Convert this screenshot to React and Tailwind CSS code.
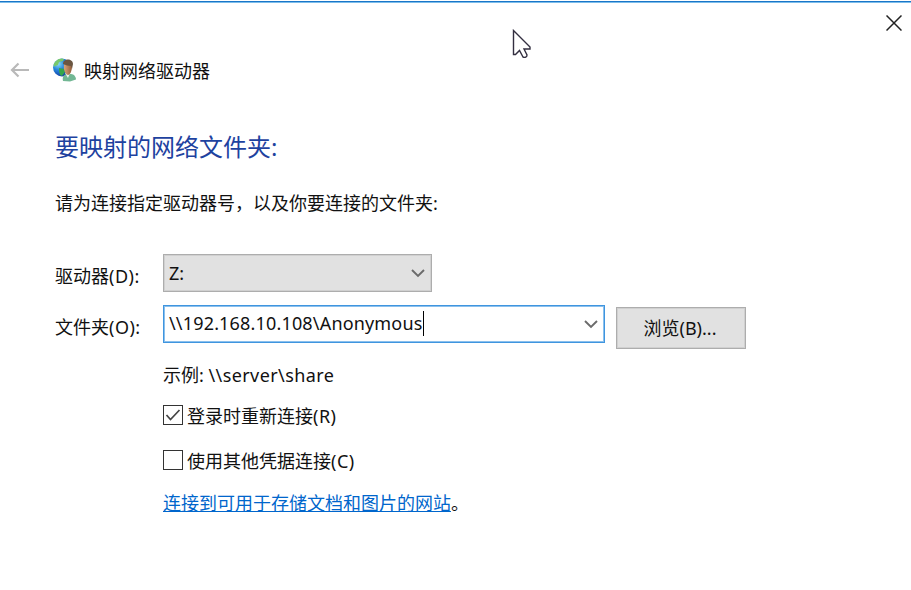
import React from "react";

function Chevron() {
  return (
    <svg className="h-[10px] w-[14px] shrink-0" viewBox="0 0 14 10" fill="none" stroke="#6b6b6b" strokeWidth="1.9">
      <path d="M1 2l6 6 6-6" />
    </svg>
  );
}

function AccountGlobe() {
  return (
    <svg className="h-[26px] w-[26px] shrink-0" viewBox="0 0 26 26">
      <defs>
        <radialGradient id="sea" cx="0.3" cy="0.3" r="0.75">
          <stop offset="0" stopColor="#8fdcf5" />
          <stop offset="0.45" stopColor="#2687dc" />
          <stop offset="1" stopColor="#1238a0" />
        </radialGradient>
        <linearGradient id="skin" x1="0" x2="1">
          <stop offset="0" stopColor="#dba77c" />
          <stop offset="1" stopColor="#925c38" />
        </linearGradient>
      </defs>
      <circle cx="10" cy="10.500" r="9" fill="url(#sea)" />
      <path d="M3 5c3-4 7-4 9-3l-1 2-4 1-1 3-3 1-1 1c-1-2 0-4 1-5z" fill="#79c96c" />
      <path d="M7 11l5 1 1 3-3 4-2-1-1-4z" fill="#35a64a" />
      <path d="M11 24c-1-4 1-7 4-7h4c3 0 5 3 5 5.500l-6 2z" fill="#72b794" />
      <path d="M13 16l3 5 2-5z" fill="#eef4ee" />
      <path d="M12 8c1-3 7-3 8 1 0 5-2 9-4 9s-5-5-4-10z" fill="url(#skin)" />
      <path d="M11 7c0-6 10-6 10 0l-1 5-1-3c-3 0-5-1-8-2z" fill="#6b5642" />
    </svg>
  );
}

export default function App() {
  return (
    <div className="relative flex h-[590px] w-[911px] flex-col overflow-hidden bg-white font-['Noto_Sans','Noto_Sans_CJK_SC',sans-serif] text-[18px] leading-[24px] whitespace-nowrap text-[#111]">
      <div className="mt-px h-[2px] shrink-0 border-b border-[#7dbdea] bg-[#1976c8]" />
      <div className="flex h-[41px] shrink-0 justify-end pt-[12px] pr-[9px]">
        <svg className="h-[16px] w-[16px]" viewBox="0 0 16 16" fill="none" stroke="#222" strokeWidth="1.5">
          <path d="M0.500 0.500l15 15M15.500 0.500l-15 15" />
        </svg>
      </div>

      <header className="flex h-[52px] shrink-0 items-center pl-[10px]">
        <svg className="h-[16px] w-[19px]" viewBox="0 0 19 16" fill="none" stroke="#b9b9b9" strokeWidth="2.2">
          <path d="M19 8H2M8.500 1.500L2 8l6.500 6.500" />
        </svg>
        <div className="ml-[23px]"><AccountGlobe /></div>
        <span className="ml-[6px] pt-[2px]">映射网络驱动器</span>
      </header>

      <main className="flex flex-col pl-[55px]">
        <h1 className="mt-[35px] h-[32px] text-[24px] leading-[32px] text-[#1e429f]">要映射的网络文件夹:</h1>
        <p className="mt-[28px] h-[24px]">请为连接指定驱动器号，以及你要连接的文件夹:</p>

        <div className="mt-[39px] flex h-[38px]">
          <label className="w-[108px] pt-[10px]">驱动器<span className="tracking-[0.5px]">(D):</span></label>
          <div className="flex h-[38px] w-[269px] items-center justify-between border border-[#adadad] bg-[#e1e1e1] pr-[6px] pl-[5px] shadow-[inset_0_0_0_1px_#d0d0d0]">
            <span>Z:</span>
            <Chevron />
          </div>
        </div>

        <div className="mt-[13px] flex h-[44px]">
          <label className="w-[108px] pt-[10px]">文件夹<span className="tracking-[0.5px]">(O):</span></label>
          <div className="flex h-[38px] w-[442px] items-center border border-[#3f95df] pr-[6px] pl-[5px] shadow-[inset_0_0_0_1px_#8bc0ed]">
            <span className="-mt-[2px] tracking-[0.17px]">{"\\\\192.168.10.108\\Anonymous"}</span>
            <span className="-mt-[2px] h-[25px] w-px bg-black" />
            <span className="ml-auto flex"><Chevron /></span>
          </div>
          <button className="mt-[2px] ml-[11px] flex h-[42px] w-[130px] items-center justify-center border border-[#adadad] bg-[#e1e1e1] pr-[2px] pb-[1px] shadow-[inset_0_0_0_1px_#d0d0d0]">浏览(B)...</button>
        </div>

        <div className="flex flex-col pl-[108px]">
          <p className="mt-[14px] h-[24px]">示例: <span className="tracking-[0.4px]">{"\\\\server\\share"}</span></p>
          <label className="mt-[16px] flex h-[24px] items-center">
            <span className="mr-[4px] flex h-[20px] w-[20px] items-center justify-center border border-[#333]">
              <svg className="h-[14px] w-[16px]" viewBox="0 0 16 14" fill="none" stroke="#444" strokeWidth="1.7">
                <path d="M1.500 7l4 4.500L14.500 2" />
              </svg>
            </span>
            <span className="pt-[2px]">登录时重新连接<span className="tracking-[0.5px]">(R)</span></span>
          </label>
          <label className="mt-[21px] flex h-[24px] items-center">
            <span className="mr-[4px] h-[20px] w-[20px] border border-[#333]" />
            <span className="pt-[2px]">使用其他凭据连接<span className="tracking-[0.5px]">(C)</span></span>
          </label>
          <p className="mt-[19px] h-[24px]">
            <a className="text-[#0066cc] underline decoration-1 underline-offset-[1px]">连接到可用于存储文档和图片的网站</a>。
          </p>
        </div>
      </main>

      <svg className="absolute top-[29px] left-[512px] h-[31px] w-[20px]" viewBox="0 0 20 31" fill="white" stroke="#332f40" strokeWidth="1.4">
        <path d="M1.500 1.500v24h2l4-4 3.500 6.500c2 1 4 0 4-2L12 20h6v-2z" />
      </svg>
    </div>
  );
}
